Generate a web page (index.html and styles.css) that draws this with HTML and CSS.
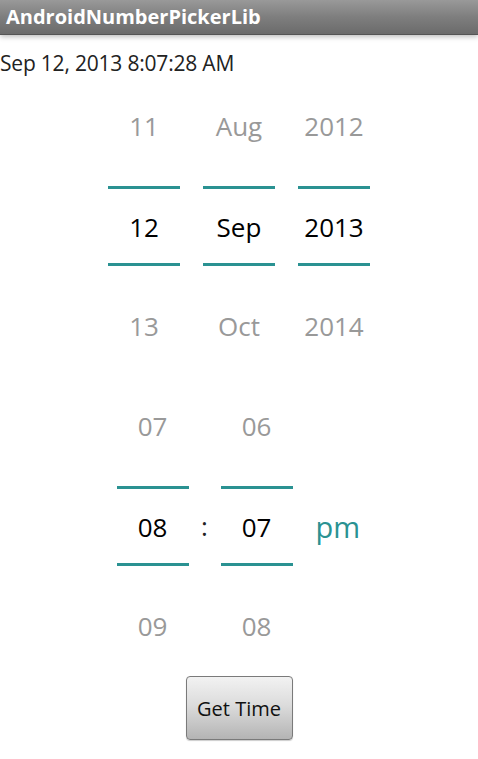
FILE: index.html
```html
<!DOCTYPE html>
<html>
<head>
<meta charset="utf-8">
<link rel="stylesheet" href="styles.css">
</head>
<body>
<header class="titlebar">AndroidNumberPickerLib</header>
<div class="datetext">Sep 12, 2013 8:07:28 AM</div>
<div class="picker-row date-row">
  <div class="col">
    <div class="cell dim">11</div>
    <div class="cell sel">12</div>
    <div class="cell dim">13</div>
  </div>
  <div class="col">
    <div class="cell dim">Aug</div>
    <div class="cell sel">Sep</div>
    <div class="cell dim">Oct</div>
  </div>
  <div class="col">
    <div class="cell dim">2012</div>
    <div class="cell sel">2013</div>
    <div class="cell dim">2014</div>
  </div>
</div>
<div class="picker-row time-row">
  <div class="col">
    <div class="cell dim">07</div>
    <div class="cell sel">08</div>
    <div class="cell dim">09</div>
  </div>
  <div class="colon">:</div>
  <div class="col">
    <div class="cell dim">06</div>
    <div class="cell sel">07</div>
    <div class="cell dim">08</div>
  </div>
  <div class="ampm">pm</div>
</div>
<div class="btnrow"><button class="btn">Get Time</button></div>
</body>
</html>
```
FILE: styles.css
```css
html, body {
  margin: 0;
  padding: 0;
  background: #ffffff;
  width: 478px;
  height: 759px;
  overflow: hidden;
  font-family: "Open Sans", "DejaVu Sans", sans-serif;
}
.titlebar {
  height: 35px;
  box-sizing: border-box;
  padding-left: 6px;
  line-height: 34px;
  font-size: 20px;
  font-weight: bold;
  color: #ffffff;
  background: linear-gradient(#999999, #7e7e7e 50%, #6b6b6b);
  border-bottom: 1px solid #555555;
  box-shadow: 0 2px 5px rgba(0,0,0,0.25);
  position: relative;
  z-index: 1;
}
.datetext {
  font-size: 21px;
  line-height: 26px;
  margin-top: 15px;
  height: 26px;
  color: #222222;
  letter-spacing: -0.2px;
}
.picker-row {
  display: flex;
  justify-content: center;
  align-items: center;
}
.date-row {
  gap: 23px;
  height: 300px;
}
.col {
  width: 72px;
  display: flex;
  flex-direction: column;
}
.cell {
  height: 100px;
  display: flex;
  align-items: center;
  justify-content: center;
  font-size: 26px;
  box-sizing: border-box;
}
.cell.dim { color: #999999; }
.cell.sel {
  color: #000000;
  margin: 10px 0;
  height: 80px;
  border-top: 3px solid #2a9292;
  border-bottom: 3px solid #2a9292;
  padding-top: 1px;
}
.time-row {
  height: 300px;
  padding-right: 2px;
}
.colon {
  width: 32px;
  text-align: center;
  font-size: 26px;
  color: #222222;
}
.ampm {
  margin-left: 23px;
  font-size: 29px;
  color: #2a9292;
  width: 44px;
}
.btnrow {
  display: flex;
  justify-content: center;
}
.btn {
  width: 107px;
  height: 64px;
  border: 1px solid #7a7a7a;
  border-radius: 4px;
  background: linear-gradient(#f2f2f2, #dcdcdc 45%, #b4b4b4);
  font-family: "Open Sans", "DejaVu Sans", sans-serif;
  font-size: 20px;
  color: #111111;
  padding: 0;
  box-shadow: 0 1px 1px rgba(0,0,0,0.2);
}
```
